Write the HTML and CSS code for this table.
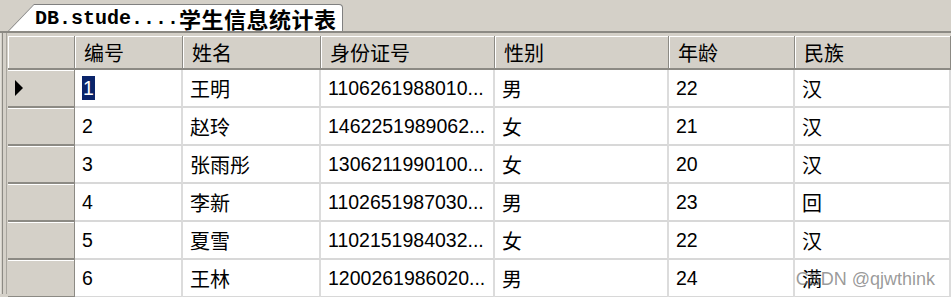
FILE: index.html
```html
<!DOCTYPE html>
<html lang="zh-CN">
<head>
<meta charset="utf-8">
<title>DB.student 学生信息统计表</title>
<link rel="stylesheet" href="styles.css">
</head>
<body>
<div class="tabbar">
  <div class="tab">
    <div class="tab-inner"><span class="mono">DB.stude....</span><span class="tab-cjk">学生信息统计表</span></div>
  </div>
</div>
<div class="sheet">
  <div class="grid">
    <div class="hcell corner"></div>
    <div class="hcell">编号</div>
    <div class="hcell">姓名</div>
    <div class="hcell">身份证号</div>
    <div class="hcell">性别</div>
    <div class="hcell">年龄</div>
    <div class="hcell">民族</div>

    <div class="rhead"><svg class="arrow" width="8" height="16" viewBox="0 0 8 16"><polygon points="0,0 8,8 0,16" fill="#000"/></svg></div>
    <div class="cell"><span class="sel">1</span></div>
    <div class="cell cjk">王明</div>
    <div class="cell">1106261988010...</div>
    <div class="cell cjk">男</div>
    <div class="cell">22</div>
    <div class="cell cjk">汉</div>

    <div class="rhead"></div>
    <div class="cell">2</div>
    <div class="cell cjk">赵玲</div>
    <div class="cell">1462251989062...</div>
    <div class="cell cjk">女</div>
    <div class="cell">21</div>
    <div class="cell cjk">汉</div>

    <div class="rhead"></div>
    <div class="cell">3</div>
    <div class="cell cjk">张雨彤</div>
    <div class="cell">1306211990100...</div>
    <div class="cell cjk">女</div>
    <div class="cell">20</div>
    <div class="cell cjk">汉</div>

    <div class="rhead"></div>
    <div class="cell">4</div>
    <div class="cell cjk">李新</div>
    <div class="cell">1102651987030...</div>
    <div class="cell cjk">男</div>
    <div class="cell">23</div>
    <div class="cell cjk">回</div>

    <div class="rhead"></div>
    <div class="cell">5</div>
    <div class="cell cjk">夏雪</div>
    <div class="cell">1102151984032...</div>
    <div class="cell cjk">女</div>
    <div class="cell">22</div>
    <div class="cell cjk">汉</div>

    <div class="rhead"></div>
    <div class="cell">6</div>
    <div class="cell cjk">王林</div>
    <div class="cell">1200261986020...</div>
    <div class="cell cjk">男</div>
    <div class="cell">24</div>
    <div class="cell cjk">满</div>
  </div>
  <div class="watermark">CSDN @qjwthink</div>
</div>
</body>
</html>
```

FILE: styles.css
```css
html, body {
  margin: 0;
  padding: 0;
  background: #d4d0c8;
  overflow: hidden;
}
body {
  width: 951px;
  height: 297px;
  font-family: "Liberation Sans", "Noto Sans CJK SC", sans-serif;
  color: #000;
}
.tabbar {
  height: 27px;
  padding: 4px 0 0 8px;
  border-bottom: 2px solid #8c8a84;
  background: #d4d0c8;
}
.tab {
  width: 335px;
  height: 27px;
  background: #808080;
  padding: 1px 1px 0 1px;
  box-sizing: border-box;
  clip-path: polygon(26px 0, 100% 0, 100% 100%, 0 100%);
  border-top-right-radius: 4px;
}
.tab-inner {
  height: 100%;
  background: #fff;
  clip-path: polygon(25px 0, 100% 0, 100% 100%, 0 100%);
  border-top-right-radius: 3px;
  display: flex;
  align-items: center;
  padding-left: 26px;
  box-sizing: border-box;
  white-space: nowrap;
}
.mono {
  font-family: "Liberation Mono", monospace;
  font-weight: bold;
  font-size: 20px;
}
.tab-cjk {
  font-family: "Noto Sans CJK SC", sans-serif;
  font-weight: bold;
  font-size: 22px;
  letter-spacing: 0.5px;
}
.sheet {
  position: relative;
  padding: 3px 0 0 8px;
  background:
    linear-gradient(to right, #e4e2dc 0 1px, #d4d0c8 1px 2px, #8c8a84 2px 3px, #d4d0c8 3px 6px, #a8a59e 6px 7px, #d4d0c8 7px 8px) left top / 8px 100% no-repeat,
    #d4d0c8;
  height: 258px;
}
.grid {
  display: grid;
  grid-template-columns: 67px 108px 138px 174px 174px 126px 1fr;
  grid-template-rows: 34px repeat(6, 38px);
}
.hcell {
  background: #d4d0c8;
  border-right: 1px solid #8c8a84;
  border-bottom: 2px solid #8c8a84;
  box-shadow: inset 1px 1px 0 #fff;
  display: flex;
  align-items: center;
  padding-left: 9px;
  font-family: "Noto Sans CJK SC", sans-serif;
  font-size: 20px;
  white-space: nowrap;
}
.hcell.corner {
  padding: 0;
}
.rhead {
  background: #d4d0c8;
  border-right: 1px solid #8c8a84;
  border-bottom: 2px solid #8c8a84;
  box-shadow: inset 0 1px 0 #fff;
  display: flex;
  align-items: center;
  padding-left: 7px;
}
.arrow {
  display: block;
}
.cell {
  background: #fff;
  border-right: 2px solid #dcdcdc;
  border-bottom: 2px solid #d8d8d8;
  display: flex;
  align-items: center;
  padding-left: 7px;
  font-size: 19.5px;
  white-space: nowrap;
  overflow: hidden;
}
.cell.cjk {
  font-family: "Noto Sans CJK SC", sans-serif;
  font-size: 20px;
}
.sel {
  background: #0a246a;
  color: #fff;
  line-height: 24px;
  padding: 0 1px;
}
.watermark {
  position: absolute;
  right: 16px;
  bottom: 4px;
  font-family: "Liberation Sans", sans-serif;
  font-size: 18px;
  color: rgba(110, 110, 110, 0.7);
  white-space: nowrap;
}
```
